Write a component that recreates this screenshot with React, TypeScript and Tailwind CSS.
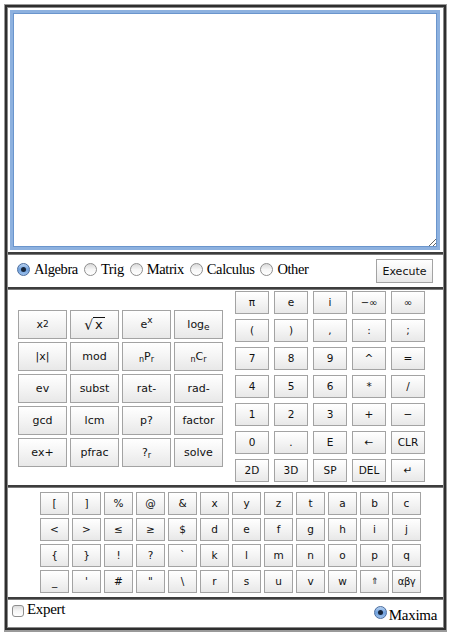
import React from "react";

const sans = "font-['DejaVu_Sans',_'Liberation_Sans',_sans-serif]";
const serif = "font-['Liberation_Serif',_'DejaVu_Serif',_serif]";

const btn =
  "flex items-center justify-center border border-[#a3a3a3] bg-gradient-to-b from-white via-[#f4f4f4] to-[#e8e8e8] text-[#111] leading-none";

function Radio({ checked = false }: { checked?: boolean }) {
  if (checked) {
    return (
      <span className="inline-flex w-[13px] h-[13px] shrink-0 items-center justify-center rounded-full border border-[#4b6d9e] bg-gradient-to-b from-[#b9d3f2] via-[#6fa0dc] to-[#9cc0ec]">
        <span className="w-[5px] h-[5px] rounded-full bg-[#17263b]" />
      </span>
    );
  }
  return (
    <span className="inline-block w-[13px] h-[13px] shrink-0 rounded-full border border-[#8e8e8e] bg-gradient-to-b from-[#d9d9d9] via-[#f6f6f6] to-white" />
  );
}

function Divider() {
  return <div className="h-[3px] bg-[#3d3d3d] border-b border-[#7a7a7a]" />;
}

const fnKeys: React.ReactNode[] = [
  <span>x<sup className="text-[9px] relative -top-[1px]">2</sup></span>,
  <span className="flex items-end text-[13px]">
    <span className="text-[14px]">√</span>
    <span className="border-t border-[#111] px-[2px] leading-[14px]">x</span>
  </span>,
  <span>e<sup className="text-[9px]">x</sup></span>,
  <span>log<sub className="text-[9px]">e</sub></span>,
  "|x|",
  "mod",
  <span><sub className="text-[8px]">n</sub>P<sub className="text-[8px]">r</sub></span>,
  <span><sub className="text-[8px]">n</sub>C<sub className="text-[8px]">r</sub></span>,
  "ev",
  "subst",
  "rat-",
  "rad-",
  "gcd",
  "lcm",
  "p?",
  "factor",
  "ex+",
  "pfrac",
  <span>?<sub className="text-[8px]">r</sub></span>,
  "solve",
];

const padKeys = [
  "π", "e", "i", "−∞", "∞",
  "(", ")", ",", ":", ";",
  "7", "8", "9", "^", "=",
  "4", "5", "6", "*", "/",
  "1", "2", "3", "+", "−",
  "0", ".", "E", "←", "CLR",
  "2D", "3D", "SP", "DEL", "↵",
];

const charKeys = [
  "[", "]", "%", "@", "&", "x", "y", "z", "t", "a", "b", "c",
  "<", ">", "≤", "≥", "$", "d", "e", "f", "g", "h", "i", "j",
  "{", "}", "!", "?", "`", "k", "l", "m", "n", "o", "p", "q",
  "_", "'", "#", "\"", "\\", "r", "s", "u", "v", "w", "⇑", "αβγ",
];

const modes = ["Algebra", "Trig", "Matrix", "Calculus", "Other"];

export default function App() {
  return (
    <div className="w-[451px] h-[635px] bg-white pt-[4px] pl-[4px]">
      <div className="w-[443px] border border-b-2 border-[#9a9a9a]">
        <div className="border-2 border-[#2e2e2e]">
          <div className="flex flex-col border border-[#8a8a8a]">
            <div className="h-[244px] pt-[2px] pl-[2px] pr-[3px] pb-[2px]">
              <textarea
                readOnly
                className="w-full h-full block bg-white border-[3px] border-[#8db1df] shadow-[inset_0_0_0_1px_#6a95cd] outline-none"
              />
            </div>
            <Divider />
            <div className={`h-[32px] flex items-center pl-[9px] pr-[10px] ${serif} text-[14.5px] tracking-[-0.4px] text-black`}>
              {modes.map((m, i) => (
                <label key={m} className="flex items-center mr-[6px] -mt-[3px]">
                  <Radio checked={i === 0} />
                  <span className="ml-[4px]">{m}</span>
                </label>
              ))}
              <button
                className={`ml-auto w-[57px] h-[24px] ${btn} ${sans} text-[11px] tracking-normal`}
              >
                Execute
              </button>
            </div>
            <Divider />
            <div className={`h-[195px] flex items-center pl-[10px] ${sans}`}>
              <div className="grid grid-cols-[repeat(4,49px)] auto-rows-[29px] gap-[3px] mt-[1px]">
                {fnKeys.map((k, i) => (
                  <div key={i} className={`${btn} text-[11px]`}>
                    {k}
                  </div>
                ))}
              </div>
              <div className="ml-[12px] self-start mt-[1px] grid grid-cols-[repeat(5,34px)] auto-rows-[23px] gap-[5px]">
                {padKeys.map((k) => (
                  <div
                    key={k}
                    className={`${btn} ${k.includes("∞") ? "text-[10px]" : "text-[10.5px]"}`}
                  >
                    {k}
                  </div>
                ))}
              </div>
            </div>
            <Divider />
            <div className={`h-[109px] pl-[32px] pt-[4px] ${sans}`}>
              <div className="grid grid-cols-[repeat(12,29px)] auto-rows-[23px] gap-[3px]">
                {charKeys.map((k) => (
                  <div
                    key={k}
                    className={`${btn} ${
                      k === "⇑"
                        ? "text-[9px] text-[#8a3030]"
                        : k === "αβγ"
                        ? "text-[10px] tracking-[-0.5px]"
                        : "text-[10.5px]"
                    }`}
                  >
                    {k}
                  </div>
                ))}
              </div>
            </div>
            <Divider />
            <div className={`h-[27px] flex justify-between pl-[4px] pr-[6px] ${serif} text-[15px] tracking-[-0.3px] text-black`}>
              <label className="flex items-start pt-[1px]">
                <span className="mt-[4px] inline-block w-[12px] h-[12px] rounded-[3px] border border-[#8e8e8e] bg-gradient-to-b from-[#dcdcdc] via-[#f6f6f6] to-white" />
                <span className="ml-[3px] leading-[17px]">Expert</span>
              </label>
              <label className="flex items-end pb-[3px]">
                <span className="mb-[3px]">
                  <Radio checked />
                </span>
                <span className="ml-[2px] leading-[17px]">Maxima</span>
              </label>
            </div>
          </div>
        </div>
      </div>
    </div>
  );
}
